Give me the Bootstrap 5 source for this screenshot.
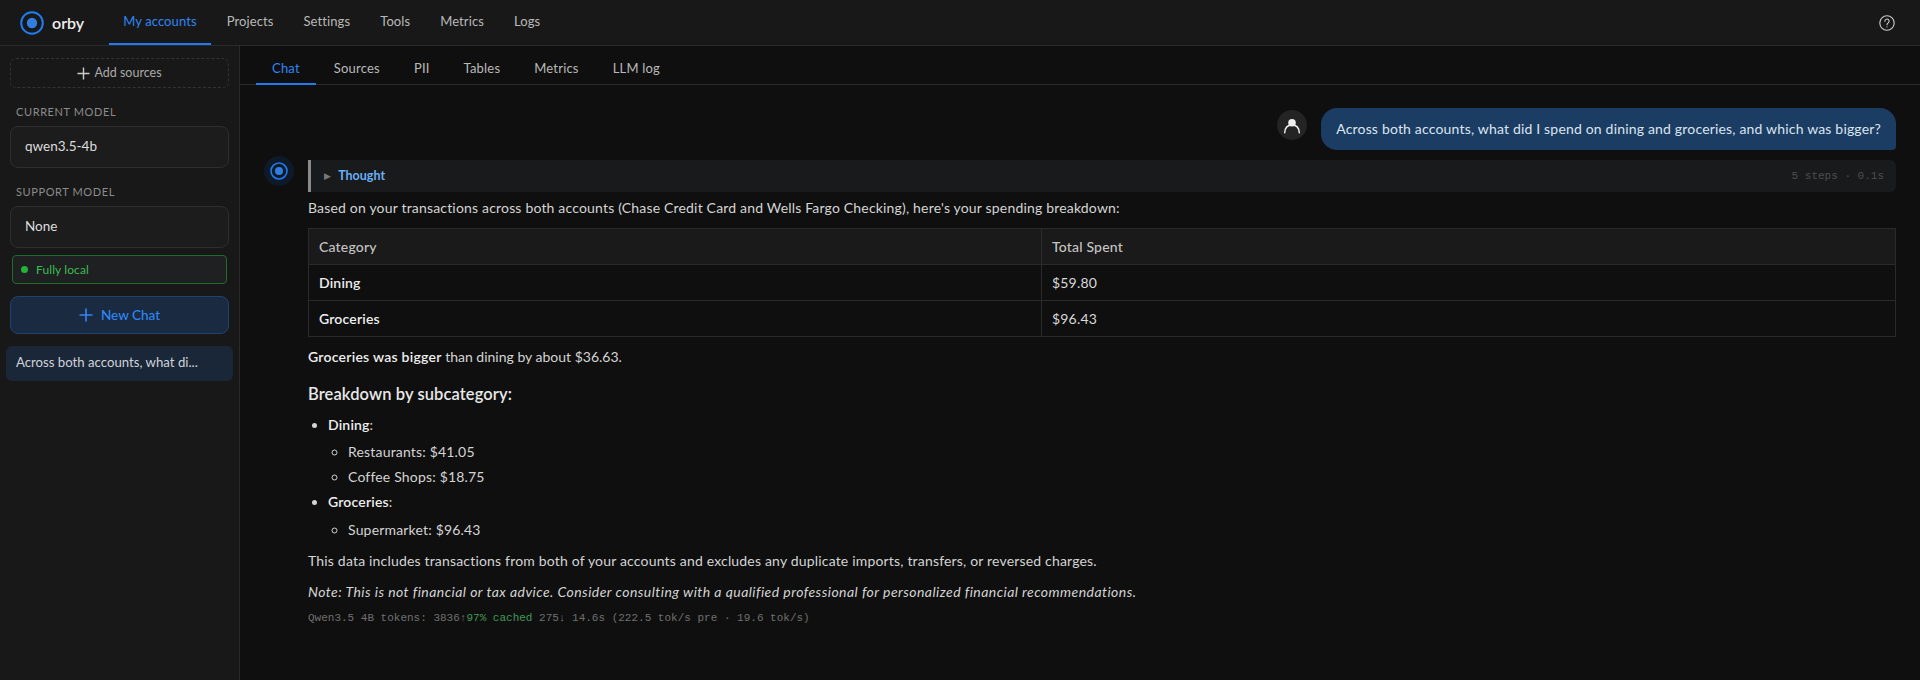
<!DOCTYPE html>
<html lang="en" data-bs-theme="dark">

<head>
  <meta charset="UTF-8" />
  <meta name="viewport" content="width=device-width, initial-scale=1.0" />
  <title>orby</title>
  <link href="https://cdn.jsdelivr.net/npm/bootstrap@5.3.0/dist/css/bootstrap.min.css" rel="stylesheet" />
  <style>
    html, body { height: 100%; }
    body { background: #0f0f0f; color: #dcdcdc; font-family: "Lato", "Noto Sans", sans-serif; font-size: 14px; overflow: hidden; }

    /* top bar */
    .top-bar { height: 46px; background: #181818; border-bottom: 1px solid #2a2a2a; padding-left: 20px; padding-right: 25px; font-size: 13px; letter-spacing: .1px; }
    .brand-name { font-size: 16px; font-weight: 600; color: #eee; margin-left: 8px; margin-right: 25px; letter-spacing: 0; }
    .top-link { display: block; height: 45px; line-height: 42px; padding: 0 14px; margin-right: 2px; color: #b9b9b9; text-decoration: none; border-bottom: 2px solid transparent; }
    .top-link.active { color: #2f86f5; border-bottom-color: #1f7bf0; }

    /* sidebar */
    .app-body { height: 634px; }
    .side-col { width: 240px; flex: none; background: #181818; border-right: 1px solid #2a2a2a; padding: 12px 6px 0; }
    .add-btn { height: 30px; margin: 0 4px; border: 1px dashed #333; border-radius: 6px; font-size: 12.5px; color: #aaa; }
    .side-label { font-size: 11px; letter-spacing: .6px; text-transform: uppercase; color: #8b8b8b; margin: 17px 10px 7px; line-height: 14px; }
    .model-box { height: 42px; margin: 0 4px; padding: 0 14px 2px; background: #1c1c1c; border: 1px solid #2e2e2e; border-radius: 8px; color: #ddd; font-size: 13.5px; }
    .local-chip { height: 29px; margin: 7px 6px 0; padding: 0 8px; background: #1f2022; border: 1px solid #1f6a2d; border-radius: 4px; font-size: 12px; letter-spacing: .1px; color: #3cbc50; }
    .local-dot { width: 7px; height: 7px; border-radius: 50%; background: #22b33a; }
    .new-chat { height: 38px; margin: 12px 4px 0; background: #1a2a40; border: 1px solid #1e4272; border-radius: 8px; color: #2f86f5; font-size: 13.5px; font-weight: 500; }
    .chat-item { height: 35px; margin-top: 12px; padding: 0 10px; background: #1a2738; border-radius: 6px; color: #cfd3d8; font-size: 13.2px; line-height: 33px; white-space: nowrap; overflow: hidden; }

    /* tabs */
    .tab-bar { height: 39px; border-bottom: 1px solid #2a2a2a; padding-left: 16px; flex: none; font-size: 13px; letter-spacing: .2px; }
    .tab-link { display: block; height: 39px; line-height: 44px; padding: 0 16px; margin-right: 2px; color: #b9b9b9; text-decoration: none; border-bottom: 2px solid transparent; }
    .tab-link.active { color: #2f86f5; border-bottom-color: #1f7bf0; }

    /* chat */
    .chat-pane { padding: 23px 24px 0 24px; letter-spacing: .18px; }
    .user-row { gap: 14px; }
    .user-avatar { width: 30px; height: 30px; border-radius: 50%; background: #242424; margin-top: 2px; }
    .user-bubble { height: 42px; padding: 0 15px 2px; background: #1b3d63; color: #dbe4ee; border-radius: 16px 16px 4px 16px; }
    .bot-row { margin-top: 10px; }
    .bot-avatar { width: 30px; height: 30px; border-radius: 50%; background: #0f1a28; flex: none; margin-top: -4px; }
    .bot-col { margin-left: 14px; }
    .thought-bar { height: 32px; background: #181a1c; border-left: 3px solid #8a8a8a; border-radius: 0 6px 6px 0; padding: 0 12px 0 13px; }
    .thought-tri { font-size: 9px; color: #777; }
    .thought-name { color: #6aaef5; font-size: 12.5px; font-weight: 700; margin-left: 7px; letter-spacing: 0; }
    .thought-meta { font-family: "Liberation Mono", monospace; font-size: 11px; color: #4d4d4d; letter-spacing: 0; }
    .msg-line { margin: 0; color: #d4d4d4; line-height: 20px; }
    .msg-table { margin: 0; border-color: #2a2a2a; --bs-table-bg: transparent; --bs-table-color: #d8d8d8; table-layout: fixed; }
    .msg-table th, .msg-table td { height: 36px; padding: 0 10px; vertical-align: middle; }
    .msg-table thead th { background: #1a1a1a; font-weight: 500; color: #c4c4c4; }
    .msg-table thead th:first-child { width: 733px; }
    .msg-table tbody th { font-weight: 600; color: #eee; }
    .based-line { margin-top: 6px; }
    .table-gap { margin-top: 10px; }
    .after-table { margin-top: 10px; letter-spacing: 0; }
    .after-table b { letter-spacing: .25px; }
    .msg-title { font-size: 16.5px; font-weight: 600; color: #e8e8e8; margin: 15px 0 0; line-height: 24px; letter-spacing: .1px; }
    .msg-list { margin: 9px 0 0; padding-left: 20px; color: #d4d4d4; line-height: 20px; }
    .msg-list ul { padding-left: 20px; margin: 7px 0 5px; list-style-type: circle; }
    .msg-list ul li + li { margin-top: 5px; }
    .msg-list ul.sub-last { margin-top: 8px; }
    .msg-list b { color: #eee; font-weight: 600; }
    .msg-line b { color: #eee; font-weight: 600; }
    .data-line { margin-top: 11px; }
    .note-line { margin-top: 11px; letter-spacing: .45px; }
    .token-line { font-family: "Liberation Mono", monospace; font-size: 11px; color: #6f6f6f; line-height: 14px; margin-top: 9px; letter-spacing: 0; }
    .token-line span { color: #3f9a57; }
  </style>
</head>

<body>
  <!-- Top bar -->
  <nav class="top-bar d-flex align-items-center">
    <svg width="24" height="24" viewBox="0 0 24 24">
      <circle cx="12" cy="12" r="10.8" fill="none" stroke="#1f7bf0" stroke-width="2" />
      <circle cx="12" cy="12" r="5.2" fill="#2f7fe0" />
    </svg>
    <span class="brand-name">orby</span>
    <a class="top-link active" href="#">My accounts</a>
    <a class="top-link" href="#">Projects</a>
    <a class="top-link" href="#">Settings</a>
    <a class="top-link" href="#">Tools</a>
    <a class="top-link" href="#">Metrics</a>
    <a class="top-link" href="#">Logs</a>
    <svg class="ms-auto" width="16" height="16" viewBox="0 0 16 16" fill="none" stroke="#ccc" stroke-width="1.1">
      <circle cx="8" cy="8" r="7.2" />
      <path d="M5.9 6.2a2.1 2.1 0 1 1 3.3 1.7c-.8.5-1.2 1-1.2 1.8" stroke-linecap="round" />
      <circle cx="8" cy="11.8" r=".6" fill="#ccc" stroke="none" />
    </svg>
  </nav>

  <div class="app-body d-flex">
    <!-- Sidebar -->
    <aside class="side-col">
      <div class="add-btn d-flex align-items-center justify-content-center gap-1">
        <svg width="13" height="13" viewBox="0 0 13 13" stroke="#ccc" stroke-width="1.4"><path d="M6.5 .5v12M.5 6.5h12" /></svg>
        Add sources
      </div>
      <div class="side-label">Current model</div>
      <div class="model-box d-flex align-items-center">qwen3.5-4b</div>
      <div class="side-label">Support model</div>
      <div class="model-box d-flex align-items-center">None</div>
      <div class="local-chip d-flex align-items-center gap-2"><span class="local-dot"></span>Fully local</div>
      <div class="new-chat d-flex align-items-center justify-content-center gap-2">
        <svg width="14" height="14" viewBox="0 0 14 14" stroke="#2f86f5" stroke-width="1.6"><path d="M7 .5v13M.5 7h13" /></svg>
        New Chat
      </div>
      <div class="chat-item">Across both accounts, what di...</div>
    </aside>

    <!-- Main -->
    <main class="flex-grow-1 d-flex flex-column">
      <div class="tab-bar d-flex">
        <a class="tab-link active" href="#">Chat</a>
        <a class="tab-link" href="#">Sources</a>
        <a class="tab-link" href="#">PII</a>
        <a class="tab-link" href="#">Tables</a>
        <a class="tab-link" href="#">Metrics</a>
        <a class="tab-link" href="#">LLM log</a>
      </div>

      <div class="chat-pane">
        <div class="user-row d-flex justify-content-end align-items-start">
          <div class="user-avatar">
            <svg class="d-block" width="30" height="30" viewBox="0 0 30 30">
              <circle cx="15" cy="12.700" r="3.800" fill="#eee" />
              <path d="M7.700 22.700C8 17.500 11 15 15 15s7 2.500 7.300 7.700" fill="none" stroke="#eee" stroke-width="1.500" stroke-linecap="round" />
            </svg>
          </div>
          <div class="user-bubble d-flex align-items-center">Across both accounts, what did I spend on dining and groceries, and which was bigger?</div>
        </div>

        <div class="bot-row d-flex">
          <div class="bot-avatar d-flex align-items-center justify-content-center">
            <svg width="18" height="18" viewBox="0 0 18 18">
              <circle cx="9" cy="9" r="8" fill="none" stroke="#1f7bf0" stroke-width="1.6" />
              <circle cx="9" cy="9" r="4" fill="#2f7fe0" />
            </svg>
          </div>
          <div class="bot-col flex-grow-1">
            <div class="thought-bar d-flex align-items-center">
              <span class="thought-tri">&#9654;</span>
              <span class="thought-name">Thought</span>
              <span class="thought-meta ms-auto">5 steps · 0.1s</span>
            </div>
            <p class="msg-line based-line">Based on your transactions across both accounts (Chase Credit Card and Wells Fargo Checking), here's your spending breakdown:</p>
            <table class="table table-bordered msg-table table-gap">
              <thead>
                <tr><th>Category</th><th>Total Spent</th></tr>
              </thead>
              <tbody>
                <tr><th>Dining</th><td>$59.80</td></tr>
                <tr><th>Groceries</th><td>$96.43</td></tr>
              </tbody>
            </table>
            <p class="msg-line after-table"><b>Groceries was bigger</b> than dining by about $36.63.</p>
            <h3 class="msg-title">Breakdown by subcategory:</h3>
            <ul class="msg-list">
              <li><b>Dining</b>:
                <ul>
                  <li>Restaurants: $41.05</li>
                  <li>Coffee Shops: $18.75</li>
                </ul>
              </li>
              <li><b>Groceries</b>:
                <ul class="sub-last">
                  <li>Supermarket: $96.43</li>
                </ul>
              </li>
            </ul>
            <p class="msg-line data-line">This data includes transactions from both of your accounts and excludes any duplicate imports, transfers, or reversed charges.</p>
            <p class="msg-line fst-italic note-line">Note: This is not financial or tax advice. Consider consulting with a qualified professional for personalized financial recommendations.</p>
            <div class="token-line">Qwen3.5 4B tokens: 3836↑<span>97% cached</span> 275↓ 14.6s (222.5 tok/s pre · 19.6 tok/s)</div>
          </div>
        </div>
      </div>
    </main>
  </div>

  <script src="https://cdn.jsdelivr.net/npm/bootstrap@5.3.0/dist/js/bootstrap.bundle.min.js"></script>
</body>

</html>
